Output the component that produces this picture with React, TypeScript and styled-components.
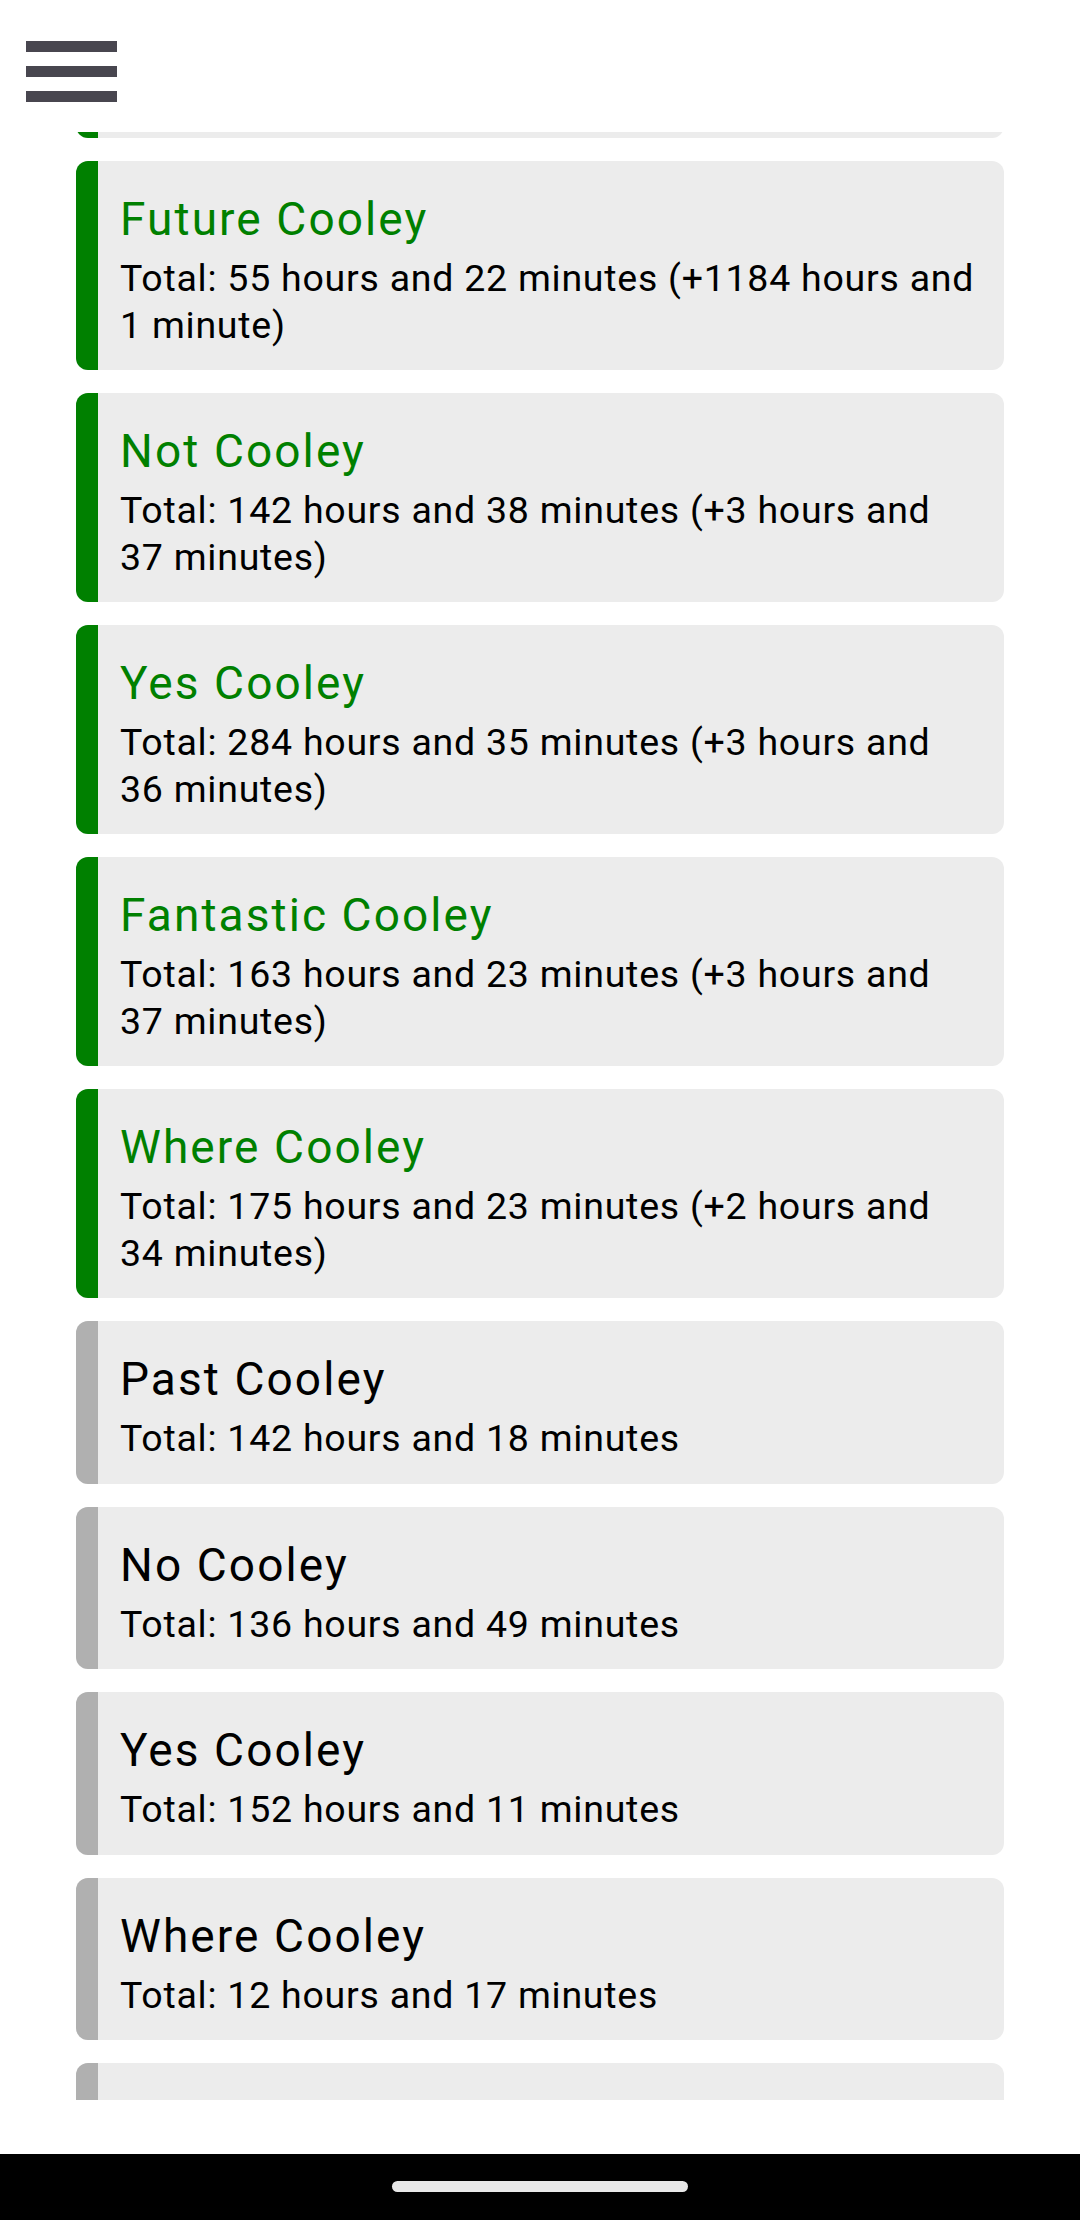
import styled, { createGlobalStyle } from 'styled-components';

type Entry = {
  name: string;
  total: string;
  active: boolean;
};

const entries: Entry[] = [
  { name: 'Last Cooley', total: 'Total: 98 hours and 12 minutes (+2 hours and 10 minutes)', active: true },
  { name: 'Future Cooley', total: 'Total: 55 hours and 22 minutes (+1184 hours and 1 minute)', active: true },
  { name: 'Not Cooley', total: 'Total: 142 hours and 38 minutes (+3 hours and 37 minutes)', active: true },
  { name: 'Yes Cooley', total: 'Total: 284 hours and 35 minutes (+3 hours and 36 minutes)', active: true },
  { name: 'Fantastic Cooley', total: 'Total: 163 hours and 23 minutes (+3 hours and 37 minutes)', active: true },
  { name: 'Where Cooley', total: 'Total: 175 hours and 23 minutes (+2 hours and 34 minutes)', active: true },
  { name: 'Past Cooley', total: 'Total: 142 hours and 18 minutes', active: false },
  { name: 'No Cooley', total: 'Total: 136 hours and 49 minutes', active: false },
  { name: 'Yes Cooley', total: 'Total: 152 hours and 11 minutes', active: false },
  { name: 'Where Cooley', total: 'Total: 12 hours and 17 minutes', active: false },
  { name: 'Present Cooley', total: 'Total: 40 hours and 5 minutes', active: false },
];

const GlobalStyle = createGlobalStyle`
  html, body {
    margin: 0;
    padding: 0;
    background: #ffffff;
  }
  body {
    font-family: Roboto, "Noto Sans", "Liberation Sans", sans-serif;
  }
`;

const Screen = styled.div`
  width: 1080px;
  height: 2220px;
  display: flex;
  flex-direction: column;
  background: #ffffff;
  overflow: hidden;
`;

const Header = styled.header`
  height: 132px;
  flex-shrink: 0;
  display: flex;
  align-items: flex-start;
  padding: 41px 0 0 26px;
  box-sizing: border-box;
  background: #ffffff;
`;

const MenuButton = styled.button`
  width: 91px;
  display: flex;
  flex-direction: column;
  gap: 14.5px;
  padding: 0;
  border: none;
  background: none;
  cursor: pointer;
`;

const MenuBar = styled.span`
  display: block;
  height: 10.5px;
  width: 100%;
  background: #48464f;
`;

const ScrollArea = styled.main`
  flex: 1;
  overflow: hidden;
`;

const List = styled.div`
  display: flex;
  flex-direction: column;
  gap: 23px;
  padding: 0 76px;
  margin-top: -202.7px;
`;

const Card = styled.div<{ $active: boolean }>`
  display: flex;
  background: #ececec;
  border-radius: 12px;
  overflow: hidden;
  flex-shrink: 0;

  &::before {
    content: '';
    width: 22px;
    flex-shrink: 0;
    background: ${({ $active }) => ($active ? '#008000' : '#b0b0b0')};
  }
`;

const CardBody = styled.div`
  flex: 1;
  padding: 31px 25px 22px 22px;
`;

const Title = styled.div<{ $active: boolean }>`
  font-size: 46px;
  line-height: 54px;
  letter-spacing: 2.1px;
  margin-bottom: 9px;
  color: ${({ $active }) => ($active ? '#008000' : '#000000')};
`;

const Total = styled.div`
  font-size: 37.5px;
  line-height: 46.5px;
  letter-spacing: 0.75px;
  color: #000000;
`;

const BottomSpace = styled.div`
  height: 54px;
  flex-shrink: 0;
`;

const NavBar = styled.div`
  height: 66px;
  flex-shrink: 0;
  background: #000000;
  display: flex;
  justify-content: center;
  padding-top: 27px;
  box-sizing: border-box;
`;

const HomePill = styled.div`
  width: 296px;
  height: 11px;
  border-radius: 6px;
  background: #e8e8e8;
`;

export default function App() {
  return (
    <>
      <GlobalStyle />
      <Screen>
        <Header>
          <MenuButton aria-label="Menu">
            <MenuBar />
            <MenuBar />
            <MenuBar />
          </MenuButton>
        </Header>
        <ScrollArea>
          <List>
            {entries.map((e, i) => (
              <Card key={i} $active={e.active}>
                <CardBody>
                  <Title $active={e.active}>{e.name}</Title>
                  <Total>{e.total}</Total>
                </CardBody>
              </Card>
            ))}
          </List>
        </ScrollArea>
        <BottomSpace />
        <NavBar>
          <HomePill />
        </NavBar>
      </Screen>
    </>
  );
}
